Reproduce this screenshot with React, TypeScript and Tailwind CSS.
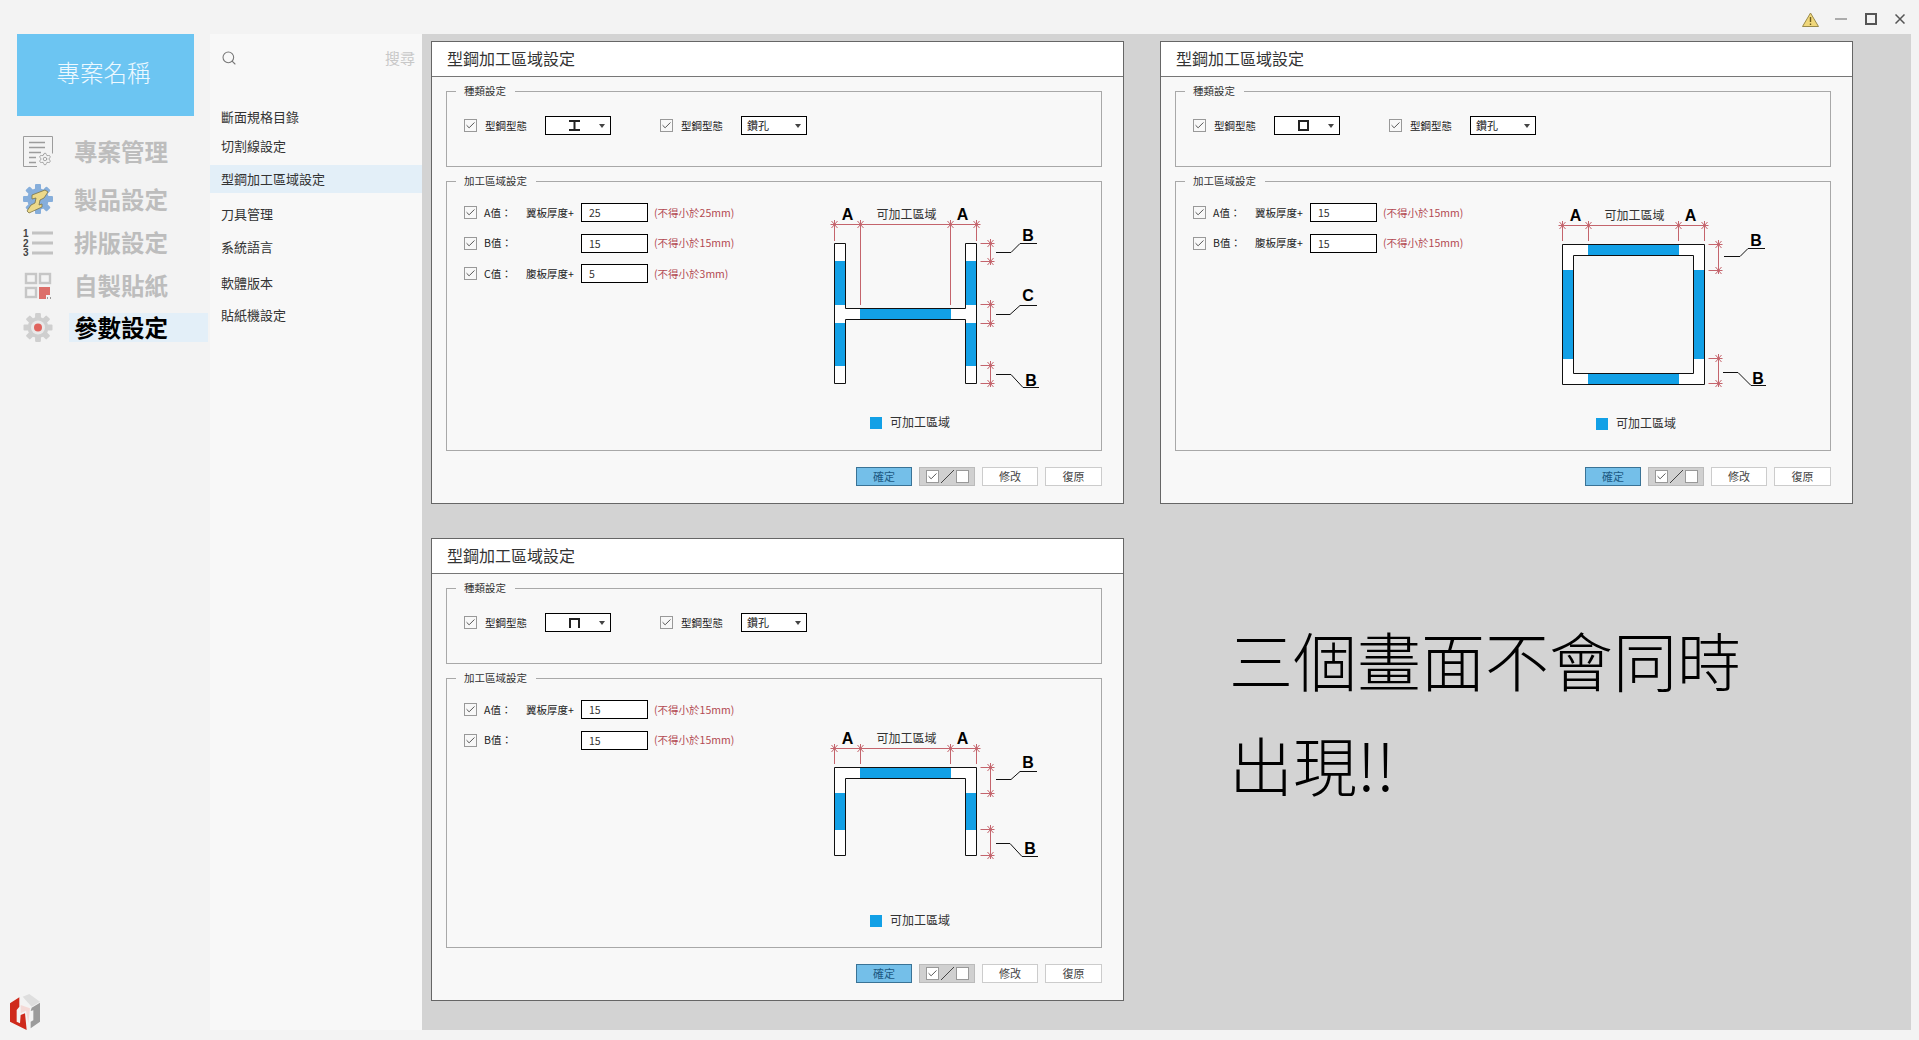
import React from 'react';
import { Check, Search, Settings } from 'lucide-react';

const PINK = '#c4646c';
const BLUE = '#12a0e6';

const menu = [
  { label: '專案管理', icon: <DocIcon />, gap: 'mt-[21px]' },
  { label: '製品設定', icon: <BeamIcon />, gap: 'mt-[19px]' },
  { label: '排版設定', icon: <ListIcon />, gap: 'mt-[14px]' },
  { label: '自製貼紙', icon: <StickerIcon />, gap: 'mt-[14px]' },
  { label: '參數設定', icon: <ParamIcon />, gap: 'mt-[13px]', active: true },
];

const subMenu = [
  { label: '斷面規格目錄', gap: 'mt-[21px]' },
  { label: '切割線設定', gap: 'mt-[1px]' },
  { label: '型鋼加工區域設定', gap: 'mt-[5px]', active: true },
  { label: '刀具管理', gap: 'mt-[7px]' },
  { label: '系統語言', gap: 'mt-[5px]' },
  { label: '軟體版本', gap: 'mt-[8px]' },
  { label: '貼紙機設定', gap: 'mt-[4px]' },
];

function Gear({ size, fill }: { size: number; fill: string }) {
  const c = size / 2;
  return (
    <g fill={fill}>
      <circle cx={c} cy={c} r={size * 0.36} />
      {[0, 45, 90, 135, 180, 225, 270, 315].map((a) => (
        <rect key={a} x={c - size * 0.1} y={0} width={size * 0.2} height={size * 0.22} rx={1} transform={`rotate(${a} ${c} ${c})`} />
      ))}
    </g>
  );
}

function DocIcon() {
  return (
    <svg width="30" height="31" viewBox="0 0 30 31" fill="none" stroke="#9c9c9c">
      <path d="M14 30.5H.5V.5h29v17" />
      <path d="M6 6.5h16M6 11.5h16M6 16.5h12M6 21.5h7M6 26.5h7" strokeWidth="1.4" />
      <Settings x="15" y="16" width="14" height="14" strokeWidth="1.5" stroke="#9c9c9c" />
    </svg>
  );
}

function BeamIcon() {
  return (
    <svg width="30" height="32" viewBox="0 0 30 32">
      <Gear size={30} fill="#86aedb" />
      <path d="M9 11 22 6l3 2-4 6-4 2-1 5 3-1 0 3-13 6-2-2 4-6 4-2 1-5-4 1z" fill="#ecd98a" stroke="#7b7448" strokeWidth=".8" />
    </svg>
  );
}

function ListIcon() {
  return (
    <svg width="30" height="28" viewBox="0 0 30 28">
      <g fill="#444" fontSize="10" fontWeight="700" fontFamily="Liberation Sans, sans-serif">
        <text x="0" y="8">1</text>
        <text x="0" y="17.5">2</text>
        <text x="0" y="27">3</text>
      </g>
      <path d="M9 4h21M9 14h21M9 24h21" stroke="#c2c2c2" strokeWidth="3" />
    </svg>
  );
}

function StickerIcon() {
  return (
    <svg width="30" height="27" viewBox="0 0 30 27">
      <g fill="none" stroke="#c6c6c6" strokeWidth="2.4">
        <rect x="3" y="2" width="10" height="9" />
        <rect x="17" y="2" width="10" height="9" />
        <rect x="3" y="16" width="10" height="9" />
      </g>
      <path d="M16 15h11v8h-4v4h-7z" fill="#dc6f6a" />
      <path d="M24 25h1v2h-1zM27 25h1v2h-1z" fill="#999" />
    </svg>
  );
}

function ParamIcon() {
  return (
    <svg width="30" height="29" viewBox="0 0 29 29">
      <Gear size={29} fill="#cfcfcf" />
      <circle cx="14.5" cy="14.5" r="7" fill="#e9e9e9" />
      <circle cx="14.5" cy="14.5" r="4" fill="#e0645e" />
    </svg>
  );
}

function Logo() {
  return (
    <svg width="40" height="40" viewBox="0 0 120 120" className="mb-[10px] mt-auto shrink-0">
      <path d="M30 40 58 22v28l-8 10v35l10 5 2-25 13-5 5 50-50-25z" fill="#cf2a1c" />
      <path d="M68 20 88 12l32 23-25 15z" fill="#dedede" />
      <path d="M92 115 120 95V38L95 53l-3 10 8-2v30l-8 4z" fill="#9b9b9b" />
      <path d="M62 45 90 55 85 100 78 62l-16 8z" fill="#f4d9d6" />
    </svg>
  );
}

function Box({ children, className }: { children?: React.ReactNode; className: string }) {
  return <div className={`flex items-center justify-center shrink-0 ${className}`}>{children}</div>;
}

function CheckBox() {
  return (
    <Box className="w-[13px] h-[13px] border border-[#999] bg-[#f8f8f8]">
      <Check size={11} strokeWidth={1.8} className="text-[#333]" />
    </Box>
  );
}

function TypeGlyph({ kind }: { kind: string }) {
  return (
    <svg width="13" height="11" viewBox="0 0 13 11" fill="none" stroke="#222" strokeWidth="2">
      {kind === 'h' && <path d="M1 1h11M6.5 1v9M1 10h11" />}
      {kind === 'box' && <rect x="2" y="1" width="9" height="9" />}
      {kind === 'channel' && <path d="M2 11V2h9v9" />}
    </svg>
  );
}

function Dropdown({ children }: { children: React.ReactNode }) {
  return (
    <div className="w-[66px] h-[19px] border border-black bg-white flex items-center relative">
      {children}
      <span className="absolute right-[5px] top-[7px] border-x-[3.5px] border-x-transparent border-t-[4px] border-t-[#444]" />
    </div>
  );
}

type Row = { name: string; extra: string; value: string; hint: string };

function ValueRow({ name, extra, value, hint }: Row) {
  return (
    <div className="flex items-center h-[19px] text-[10.5px] text-[#222]">
      <CheckBox />
      <span className="w-[42px] ml-[7px]">{name}</span>
      <span className="w-[55px]">{extra}</span>
      <input readOnly value={value} className="w-[67px] h-[19px] border border-black bg-white pl-[7px] text-[10.5px] text-[#333] outline-none" />
      <span className="ml-[6px] text-[#b34a52]">{hint}</span>
    </div>
  );
}

type Leader = { d: string; label: string; x: number; y: number };
type DiagramProps = {
  xs: number[];
  dimY: number;
  extEnds: number[];
  labelY: number;
  sides: { x: number; ticks: number[] }[];
  leaders: Leader[];
  legendX: number;
  legendY: number;
  outline: string;
  blue: number[][];
};

function Diagram({ xs, dimY, extEnds, labelY, sides, leaders, legendX, legendY, outline, blue }: DiagramProps) {
  return (
    <svg width="300" height="250" viewBox="0 0 300 250" className="shrink-0 mt-[2px]">
      <path d={outline} fill="#fff" fillRule="evenodd" />
      {blue.map(([x, y, w, h]) => (
        <rect key={`${x}-${y}`} x={x} y={y} width={w} height={h} fill={BLUE} />
      ))}
      <path d={outline} fill="none" stroke="#111" />
      <g stroke={PINK} fill="none">
        <path d={`M${xs[0] - 4} ${dimY + 0.5}H${xs[3] + 4}`} />
        {xs.map((x, i) => (
          <path key={x} d={`M${x} ${dimY - 4}V${extEnds[i]}M${x - 3} ${dimY - 3}l6 7M${x + 3} ${dimY - 3}l-6 7`} />
        ))}
        {sides.map((s) => (
          <g key={s.ticks[0]}>
            <path d={`M${s.x} ${s.ticks[0] - 4}V${s.ticks[1] + 4}`} />
            {s.ticks.map((y) => (
              <path key={y} d={`M${s.x - 10} ${y + 0.5}H${s.x + 4}M${s.x - 3} ${y - 3}l6 7M${s.x + 3} ${y - 3}l-6 7`} />
            ))}
          </g>
        ))}
      </g>
      <g fontFamily="Liberation Sans, sans-serif" fontWeight="700" fontSize="16" textAnchor="middle" fill="#000">
        <text x={xs[0] + 13} y={labelY + 5}>A</text>
        <text x={xs[3] - 14} y={labelY + 5}>A</text>
        {leaders.map((l) => (
          <text key={l.d} x={l.x} y={l.y + 5}>{l.label}</text>
        ))}
      </g>
      <text x={(xs[1] + xs[2]) / 2 + 1} y={labelY + 4} fontSize="12" textAnchor="middle" fill="#333">可加工區域</text>
      {leaders.map((l) => (
        <path key={l.d} d={l.d} fill="none" stroke="#111" />
      ))}
      <rect x={legendX} y={legendY} width="12" height="12" fill={BLUE} />
      <text x={legendX + 20} y={legendY + 10} fontSize="12" fill="#333">可加工區域</text>
    </svg>
  );
}

const hBeam: DiagramProps = {
  xs: [34.5, 60.5, 150.5, 176.5],
  dimY: 34,
  extEnds: [51, 115, 115, 51],
  labelY: 25,
  outline: 'M34.5 53.5H45.5V118.5H165.5V53.5H176.5V193.5H165.5V129.5H45.5V193.5H34.5Z',
  blue: [[35, 71, 11, 44], [35, 133, 11, 43], [165, 71, 11, 44], [165, 133, 11, 43], [60, 119, 91, 10]],
  sides: [
    { x: 190.5, ticks: [53, 71] },
    { x: 190.5, ticks: [114, 133] },
    { x: 190.5, ticks: [175, 193] },
  ],
  leaders: [
    { d: 'M196 62.5H211L220 53.5H237', label: 'B', x: 228, y: 46 },
    { d: 'M196 124.5H210L220 115.5H237', label: 'C', x: 228, y: 106 },
    { d: 'M196 184.5H211L223 197.5H239', label: 'B', x: 231, y: 191 },
  ],
  legendX: 70,
  legendY: 227,
};

const boxBeam: DiagramProps = {
  xs: [33.5, 59.5, 149.5, 175.5],
  dimY: 35,
  extEnds: [51, 51, 51, 51],
  labelY: 26,
  outline: 'M33.5 54.5H175.5V194.5H33.5ZM44.5 65.5V183.5H164.5V65.5Z',
  blue: [[59, 55, 91, 10], [59, 184, 91, 10], [34, 80, 10, 89], [165, 80, 10, 89]],
  sides: [
    { x: 189.5, ticks: [54, 80] },
    { x: 189.5, ticks: [168, 193] },
  ],
  leaders: [
    { d: 'M195 66.5H211L219 58.5H236', label: 'B', x: 227, y: 51 },
    { d: 'M194 182.5H209L222 195.5H237', label: 'B', x: 229, y: 189 },
  ],
  legendX: 67,
  legendY: 228,
};

const channelBeam: DiagramProps = {
  xs: [34.5, 60.5, 150.5, 176.5],
  dimY: 61,
  extEnds: [77, 77, 77, 77],
  labelY: 52,
  outline: 'M34.5 80.5H176.5V168.5H165.5V91.5H45.5V168.5H34.5Z',
  blue: [[60, 81, 91, 10], [35, 106, 11, 37], [165, 106, 11, 37]],
  sides: [
    { x: 190.5, ticks: [80, 106] },
    { x: 190.5, ticks: [142, 168] },
  ],
  leaders: [
    { d: 'M196 92.5H211L220 84.5H237', label: 'B', x: 228, y: 76 },
    { d: 'M196 156.5H210L222 169.5H238', label: 'B', x: 230, y: 162 },
  ],
  legendX: 70,
  legendY: 228,
};

function Group({ title, className, children }: { title: string; className: string; children: React.ReactNode }) {
  return (
    <fieldset className={`border border-[#a8a8a8] ${className}`}>
      <legend className="ml-[9px] pl-[8px] pr-[9px] text-[10.5px] leading-[14px] text-[#333]">{title}</legend>
      {children}
    </fieldset>
  );
}

function SettingsCard({ kind, rows, diagram }: { kind: string; rows: Row[]; diagram: DiagramProps }) {
  return (
    <div className="w-[693px] h-[463px] border border-[#666] bg-[#f8f8f8] flex flex-col">
      <div className="h-[35px] shrink-0 bg-white border-b border-[#777] pl-[15px] pb-[3px] flex items-center text-[16px] text-[#333]">型鋼加工區域設定</div>
      <div className="pt-[7px] pl-[14px] pr-[21px] flex flex-col">
        <Group title="種類設定" className="h-[83px]">
          <div className="flex items-center pt-[18px] pl-[17px] text-[10.5px] text-[#222]">
            <CheckBox />
            <span className="ml-[8px] w-[60px]">型鋼型態</span>
            <Dropdown>
              <span className="ml-[22px] flex"><TypeGlyph kind={kind} /></span>
            </Dropdown>
            <span className="ml-[49px]"><CheckBox /></span>
            <span className="ml-[8px] w-[60px]">型鋼型態</span>
            <Dropdown>
              <span className="ml-[5px] text-[11px]">鑽孔</span>
            </Dropdown>
          </div>
        </Group>
        <Group title="加工區域設定" className="h-[277px] mt-[7px]">
          <div className="flex">
            <div className="w-[353px] shrink-0 pl-[17px] pt-[15px] flex flex-col gap-[11.5px]">
              {rows.map((r) => (
                <ValueRow key={r.name} {...r} />
              ))}
            </div>
            <Diagram {...diagram} />
          </div>
        </Group>
        <div className="flex justify-end gap-[7px] mt-[16px] text-[11px]">
          <Box className="w-[56px] h-[19px] bg-[#74bfe9] border border-[#3a7396] text-[#1d5a84]">確定</Box>
          <Box className="w-[56px] h-[19px] bg-[#d0d0d0] border border-[#bbb] gap-[2px]">
            <Box className="w-[13px] h-[13px] bg-white border border-[#999]">
              <Check size={11} strokeWidth={1.8} className="text-[#333]" />
            </Box>
            <svg width="13" height="13" viewBox="0 0 13 13"><path d="M0 13 13 0" stroke="#444" /></svg>
            <span className="w-[13px] h-[13px] bg-white border border-[#999]" />
          </Box>
          <Box className="w-[56px] h-[19px] bg-white border border-[#ccc] text-[#444]">修改</Box>
          <Box className="w-[57px] h-[19px] bg-white border border-[#ccc] text-[#444]">復原</Box>
        </div>
      </div>
    </div>
  );
}

export default function App() {
  return (
    <div className="w-[1919px] h-[1040px] overflow-hidden flex bg-[#f3f3f3] font-['Noto_Sans_CJK_TC',sans-serif]">
      <aside className="w-[210px] h-full shrink-0 flex flex-col">
        <div className="ml-[17px] mt-[34px] w-[177px] h-[82px] shrink-0 bg-[#6cc5f2] pb-[4px] pr-[4px] flex items-center justify-center text-[23.5px] font-light text-[#eef9ff]">專案名稱</div>
        {menu.map((m) => (
          <div key={m.label} className={`flex items-center h-[29px] ml-[23px] ${m.gap}`}>
            <div className="w-[46px] shrink-0 flex">{m.icon}</div>
            <div className={`flex-1 h-full mr-[2px] pl-[5px] flex items-center text-[23.5px] font-bold ${m.active ? 'bg-[#e3eff8] text-black' : 'text-[#bdbdbd]'}`}>{m.label}</div>
          </div>
        ))}
        <Logo />
      </aside>

      <nav className="w-[212px] shrink-0 mt-[34px] mb-[10px] bg-[#f8f8f8] flex flex-col">
        <div className="h-[48px] shrink-0 pl-[11px] pr-[7px] flex items-center justify-between">
          <Search size={16} strokeWidth={1.6} className="text-[#777]" />
          <span className="text-[15px] text-[#c8c8c8]">搜尋</span>
        </div>
        {subMenu.map((s) => (
          <div key={s.label} className={`h-[28px] shrink-0 pl-[11px] flex items-center text-[13px] text-[#333] ${s.gap} ${s.active ? 'bg-[#e3eff8]' : ''}`}>{s.label}</div>
        ))}
      </nav>

      <div className="flex-1 flex flex-col mr-[8px]">
        <div className="h-[34px] shrink-0 pt-[4px] pr-[6px] flex items-center justify-end gap-[18px]">
          <svg width="17" height="15" viewBox="0 0 17 15" className="mr-[-2px]">
            <path d="M8.5 1 16.5 14.5H.5Z" fill="#f0d77a" stroke="#9a8a4a" />
            <path d="M8.5 5v5M8.5 11.5V13" stroke="#6d5a1c" strokeWidth="1.4" />
          </svg>
          <svg width="12" height="12" viewBox="0 0 12 12"><path d="M0 6h12" stroke="#999" strokeWidth="1.6" /></svg>
          <svg width="12" height="12" viewBox="0 0 12 12"><rect x="1" y="1" width="10" height="10" fill="none" stroke="#555" strokeWidth="2" /></svg>
          <svg width="10" height="10" viewBox="0 0 10 10"><path d="M.5.5l9 9M9.5.5l-9 9" stroke="#555" strokeWidth="1.5" /></svg>
        </div>
        <main className="flex-1 mb-[10px] bg-[#d3d3d3] pl-[9px] pt-[7px] grid grid-cols-[693px_693px] grid-rows-[463px_463px] gap-x-[36px] gap-y-[34px]">
          <SettingsCard
            kind="h"
            diagram={hBeam}
            rows={[
              { name: 'A值：', extra: '翼板厚度+', value: '25', hint: '(不得小於25mm)' },
              { name: 'B值：', extra: '', value: '15', hint: '(不得小於15mm)' },
              { name: 'C值：', extra: '腹板厚度+', value: '5', hint: '(不得小於3mm)' },
            ]}
          />
          <SettingsCard
            kind="box"
            diagram={boxBeam}
            rows={[
              { name: 'A值：', extra: '翼板厚度+', value: '15', hint: '(不得小於15mm)' },
              { name: 'B值：', extra: '腹板厚度+', value: '15', hint: '(不得小於15mm)' },
            ]}
          />
          <SettingsCard
            kind="channel"
            diagram={channelBeam}
            rows={[
              { name: 'A值：', extra: '翼板厚度+', value: '15', hint: '(不得小於15mm)' },
              { name: 'B值：', extra: '', value: '15', hint: '(不得小於15mm)' },
            ]}
          />
          <div className="pl-[69px] pt-[68px] text-[64px] leading-[105px] font-light text-black">
            三個畫面不會同時
            <br />
            出現!!
          </div>
        </main>
      </div>
    </div>
  );
}
